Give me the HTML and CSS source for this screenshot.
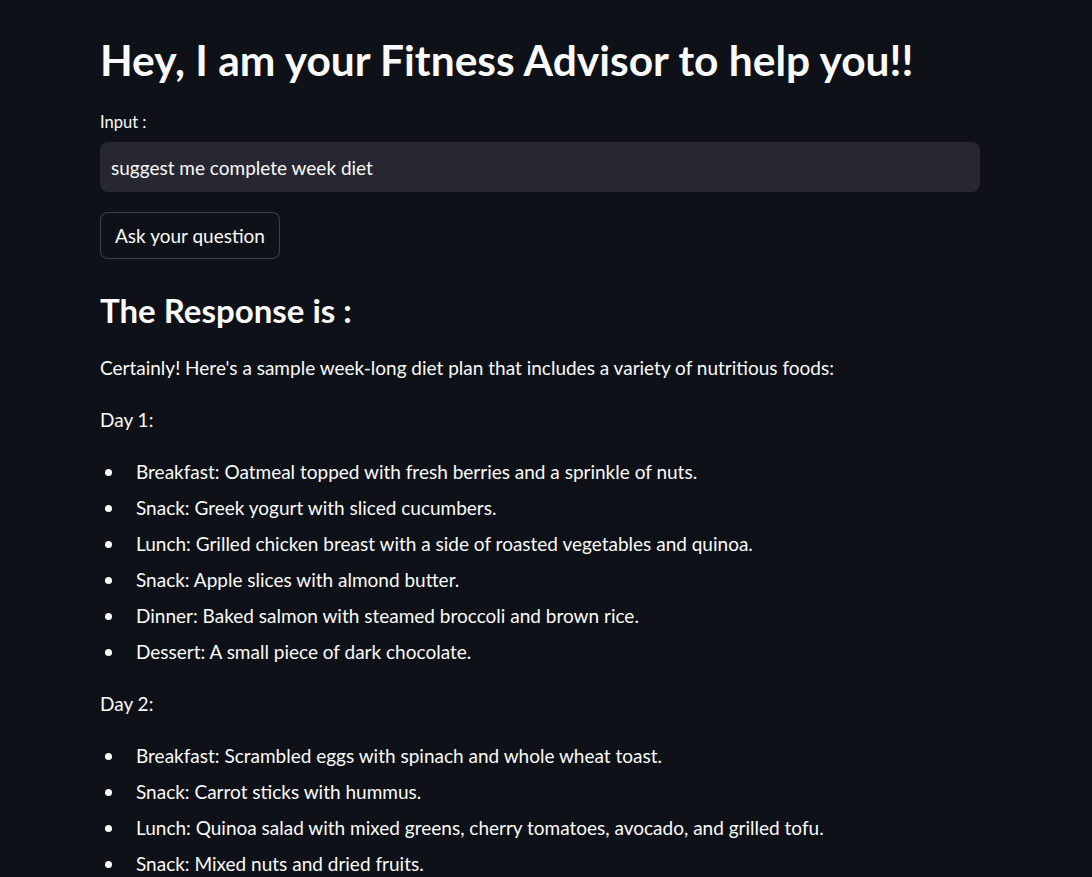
FILE: index.html
```html
<!DOCTYPE html>
<html lang="en">
<head>
<meta charset="utf-8">
<title>Fitness Advisor</title>
<link rel="stylesheet" href="styles.css">
</head>
<body>
<main class="main">
  <h1 class="title">Hey, I am your Fitness Advisor to help you!!</h1>
  <label class="label" for="q">Input :</label>
  <div class="input-box"><span class="input-text">suggest me complete week diet</span></div>
  <button class="btn" type="button">Ask your question</button>
  <h2 class="subtitle">The Response is :</h2>
  <p class="para">Certainly! Here's a sample week-long diet plan that includes a variety of nutritious foods:</p>
  <p class="para">Day 1:</p>
  <ul class="list">
    <li>Breakfast: Oatmeal topped with fresh berries and a sprinkle of nuts.</li>
    <li>Snack: Greek yogurt with sliced cucumbers.</li>
    <li>Lunch: Grilled chicken breast with a side of roasted vegetables and quinoa.</li>
    <li>Snack: Apple slices with almond butter.</li>
    <li>Dinner: Baked salmon with steamed broccoli and brown rice.</li>
    <li>Dessert: A small piece of dark chocolate.</li>
  </ul>
  <p class="para">Day 2:</p>
  <ul class="list">
    <li>Breakfast: Scrambled eggs with spinach and whole wheat toast.</li>
    <li>Snack: Carrot sticks with hummus.</li>
    <li>Lunch: Quinoa salad with mixed greens, cherry tomatoes, avocado, and grilled tofu.</li>
    <li>Snack: Mixed nuts and dried fruits.</li>
  </ul>
</main>
</body>
</html>
```
FILE: styles.css
```css
html, body {
  margin: 0;
  padding: 0;
  background: #0e1117;
  height: 100%;
  overflow: hidden;
}
body {
  color: #fafafa;
  font-family: "Lato", "Noto Sans", sans-serif;
  font-size: 19px;
}
.main {
  width: 880px;
  margin-left: 100px;
  padding-top: 33px;
  display: flex;
  flex-direction: column;
  align-items: flex-start;
}
.title {
  margin: 0;
  font-size: 42.5px;
  line-height: 54px;
  font-weight: 700;
  white-space: nowrap;
}
.label {
  margin-top: 25px;
  font-size: 16.5px;
  line-height: 20px;
}
.input-box {
  margin-top: 10px;
  width: 100%;
  height: 50px;
  box-sizing: border-box;
  background: #262730;
  border-radius: 8px;
  display: flex;
  align-items: center;
  padding: 0 11px;
}
.input-text {
  font-size: 19px;
}
.btn {
  margin-top: 20px;
  height: 47px;
  width: 180px;
  background: #0e1117;
  color: #fafafa;
  border: 1px solid rgba(250, 250, 250, 0.2);
  border-radius: 8px;
  font-family: inherit;
  font-size: 19px;
  padding: 0;
}
.subtitle {
  margin: 29px 0 0;
  font-size: 33px;
  line-height: 44px;
  font-weight: 700;
}
.para {
  margin: 22px 0 0;
  line-height: 28px;
}
.para + .para {
  margin-top: 24px;
}
.list {
  margin: 24px 0 0;
  padding: 0;
  list-style: none;
}
.list li {
  display: flex;
  align-items: center;
  line-height: 28px;
}
.list li::before {
  content: "";
  flex: none;
  width: 7px;
  height: 7px;
  border-radius: 50%;
  background: #fafafa;
  margin: 1px 24px 0 5px;
}
.list li + li {
  margin-top: 8px;
}
.list + .para {
  margin-top: 24px;
}
```
